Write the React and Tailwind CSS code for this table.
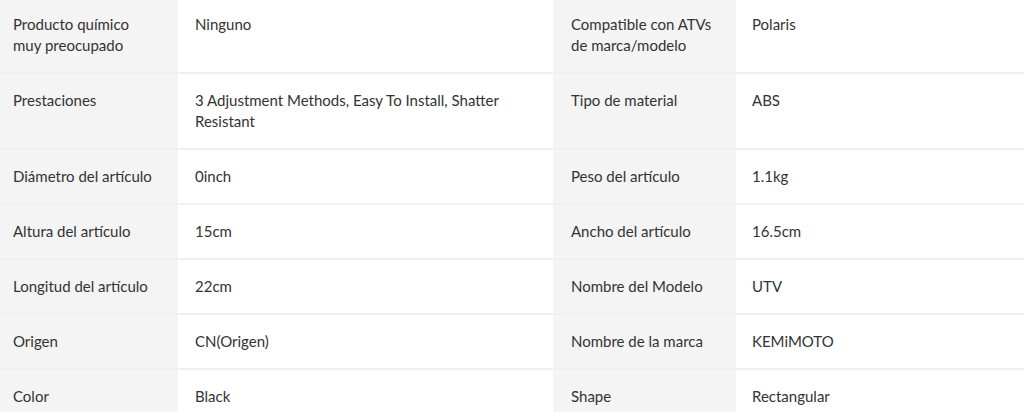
const ROWS = [
  ["Producto químico muy preocupado", "Ninguno", "Compatible con ATVs de marca/modelo", "Polaris"],
  ["Prestaciones", "3 Adjustment Methods, Easy To Install, Shatter Resistant", "Tipo de material", "ABS"],
  ["Diámetro del artículo", "0inch", "Peso del artículo", "1.1kg"],
  ["Altura del artículo", "15cm", "Ancho del artículo", "16.5cm"],
  ["Longitud del artículo", "22cm", "Nombre del Modelo", "UTV"],
  ["Origen", "CN(Origen)", "Nombre de la marca", "KEMiMOTO"],
  ["Color", "Black", "Shape", "Rectangular"],
];

export default function App() {
  return (
    <div className="h-[412px] w-[1024px] overflow-hidden bg-white font-['Lato',sans-serif] text-[15px] leading-[21px] text-[#333]">
      <div className="-mt-[2px]">
        {ROWS.map(([l1, v1, l2, v2], i) => (
          <div key={i} className="flex border-b-2 border-[#f0f0f0]">
            <div className="w-[178px] shrink-0 bg-[#f4f4f4] py-4 pl-[13px] pr-[22px]">{l1}</div>
            <div className="w-[375px] shrink-0 py-4 pl-[17px] pr-[40px]">{v1}</div>
            <div className="w-[183px] shrink-0 bg-[#f4f4f4] py-4 pl-[18px] pr-[20px]">{l2}</div>
            <div className="flex-1 py-4 pl-[16px] pr-4">{v2}</div>
          </div>
        ))}
      </div>
    </div>
  );
}
